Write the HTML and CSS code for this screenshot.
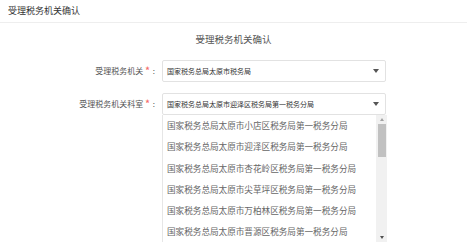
FILE: index.html
```html
<!DOCTYPE html>
<html lang="zh-CN">
<head>
<meta charset="utf-8">
<link rel="stylesheet" href="styles.css">
</head>
<body>
<div class="header">受理税务机关确认</div>
<div class="panel">
  <div class="title">受理税务机关确认</div>
  <div class="row">
    <div class="label">受理税务机关<span class="star">*</span>:</div>
    <div class="select">
      <span class="value">国家税务总局太原市税务局</span>
      <span class="caret"></span>
    </div>
  </div>
  <div class="row row2">
    <div class="label">受理税务机关科室<span class="star">*</span>:</div>
    <div class="select-col">
      <div class="select">
        <span class="value">国家税务总局太原市迎泽区税务局第一税务分局</span>
        <span class="caret"></span>
      </div>
      <div class="menu">
        <ul class="options">
          <li>国家税务总局太原市小店区税务局第一税务分局</li>
          <li>国家税务总局太原市迎泽区税务局第一税务分局</li>
          <li>国家税务总局太原市杏花岭区税务局第一税务分局</li>
          <li>国家税务总局太原市尖草坪区税务局第一税务分局</li>
          <li>国家税务总局太原市万柏林区税务局第一税务分局</li>
          <li>国家税务总局太原市晋源区税务局第一税务分局</li>
        </ul>
        <div class="scrollbar">
          <span class="arrow up"></span>
          <span class="thumb"></span>
          <span class="track"></span>
          <span class="arrow down"></span>
        </div>
      </div>
    </div>
  </div>
</div>
</body>
</html>
```
FILE: styles.css
```css
html, body {
  margin: 0;
  padding: 0;
  background: #fff;
  font-family: "Noto Sans CJK SC", "Noto Sans", sans-serif;
}
.header {
  height: 22px;
  line-height: 22px;
  padding: 0 8px;
  font-size: 9px;
  color: #333;
  border-bottom: 1px solid #eeeeee;
}
.panel {
  display: flex;
  flex-direction: column;
}
.title {
  text-align: center;
  font-size: 9.5px;
  color: #555;
  margin-top: 10px;
  line-height: 13px;
  margin-bottom: 14px;
}
.row {
  display: flex;
  align-items: flex-start;
}
.row2 {
  margin-top: 11px;
}
.label {
  width: 155px;
  text-align: right;
  font-size: 8px;
  color: #555;
  line-height: 22px;
  flex: none;
}
.star {
  color: #f56c6c;
  margin: 0 3px 0 2px;
  font-size: 9px;
  font-weight: bold;
}
.select-col {
  display: flex;
  flex-direction: column;
  margin-left: 7px;
}
.row > .select {
  margin-left: 7px;
}
.select {
  height: 20px;
  border: 1px solid #e2e2e2;
  border-radius: 2px;
  display: flex;
  align-items: center;
  justify-content: space-between;
  padding: 0 6px 0 4px;
  box-sizing: content-box;
  width: 212px;
}
.value {
  font-size: 7px;
  color: #333;
  white-space: nowrap;
}
.caret {
  width: 0;
  height: 0;
  border-left: 3px solid transparent;
  border-right: 3px solid transparent;
  border-top: 4px solid #555;
}
.menu {
  width: 225px;
  height: 127px;
  display: flex;
  background: #fff;
  border-left: 1px solid #e6e6e6;
  box-sizing: border-box;
}
.options {
  list-style: none;
  margin: 0;
  padding: 0;
  flex: 1;
}
.options li {
  height: 21.3px;
  line-height: 21.3px;
  padding-left: 4px;
  font-size: 8.6px;
  color: #666;
  white-space: nowrap;
}
.scrollbar {
  width: 11px;
  flex: none;
  background: #f1f1f1;
  display: flex;
  flex-direction: column;
  align-items: center;
}
.arrow {
  width: 0;
  height: 0;
  border-left: 2.5px solid transparent;
  border-right: 2.5px solid transparent;
  margin: 3px 0;
}
.arrow.up {
  border-bottom: 3px solid #a3a3a3;
}
.arrow.down {
  border-top: 3px solid #505050;
}
.thumb {
  width: 8px;
  height: 33px;
  background: #c1c1c1;
}
.track {
  flex: 1;
}
```
